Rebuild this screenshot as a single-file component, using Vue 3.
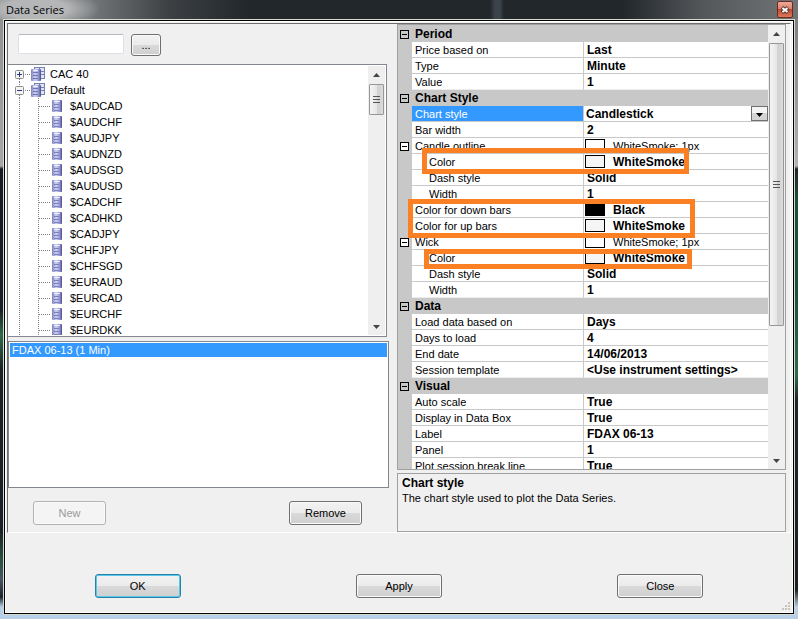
<script setup>
import { ref } from 'vue'

const instruments = [
  '$AUDCAD', '$AUDCHF', '$AUDJPY', '$AUDNZD', '$AUDSGD', '$AUDUSD', '$CADCHF',
  '$CADHKD', '$CADJPY', '$CHFJPY', '$CHFSGD', '$EURAUD', '$EURCAD', '$EURCHF', '$EURDKK'
]

const rows = [
  { kind: 'category', label: 'Period' },
  { label: 'Price based on', value: 'Last' },
  { label: 'Type', value: 'Minute' },
  { label: 'Value', value: '1' },
  { kind: 'category', label: 'Chart Style' },
  { label: 'Chart style', kind: 'select' },
  { label: 'Bar width', value: '2' },
  { label: 'Candle outline', value: 'WhiteSmoke; 1px', group: true, swatch: 'light' },
  { label: 'Color', value: 'WhiteSmoke', child: true, swatch: 'smoke' },
  { label: 'Dash style', value: 'Solid', child: true },
  { label: 'Width', value: '1', child: true },
  { label: 'Color for down bars', value: 'Black', swatch: 'black' },
  { label: 'Color for up bars', value: 'WhiteSmoke', swatch: 'smoke' },
  { label: 'Wick', value: 'WhiteSmoke; 1px', group: true, swatch: 'light' },
  { label: 'Color', value: 'WhiteSmoke', child: true, swatch: 'smoke' },
  { label: 'Dash style', value: 'Solid', child: true },
  { label: 'Width', value: '1', child: true },
  { kind: 'category', label: 'Data' },
  { label: 'Load data based on', value: 'Days' },
  { label: 'Days to load', value: '4' },
  { label: 'End date', value: '14/06/2013' },
  { label: 'Session template', value: '<Use instrument settings>' },
  { kind: 'category', label: 'Visual' },
  { label: 'Auto scale', value: 'True' },
  { label: 'Display in Data Box', value: 'True' },
  { label: 'Label', value: 'FDAX 06-13' },
  { label: 'Panel', value: '1' },
  { label: 'Plot session break line', value: 'True' }
]

const search = ref('')
const chartStyle = ref('Candlestick')
</script>

<template>
  <div class="window">
    <header class="titlebar">
      <span class="title">Data Series</span>
      <button class="close" type="button" aria-label="Close window">
        <svg width="10" height="10" viewBox="0 0 10 10">
          <path d="M2 2.500 L8 7.500 M8 2.500 L2 7.500" stroke="#5a3a3a" stroke-width="4" />
          <path d="M2.500 3 L7.500 7 M7.500 3 L2.500 7" stroke="#fff" stroke-width="2" />
        </svg>
      </button>
    </header>

    <div class="frame">
      <div class="body">
        <main class="panel">
          <section class="left">
            <div class="search">
              <input v-model="search" class="search-box" type="text" aria-label="Search instruments" />
              <button class="btn more" type="button">...</button>
            </div>

            <div class="tree">
              <ul class="nodes">
                <li class="node">
                  <svg class="root-art" width="42" height="16" viewBox="0 0 42 16">
                    <path d="M11.5 13 V16 M17 8.5 H23" class="dots" />
                    <rect x="7.5" y="4.5" width="8" height="8" rx="1" fill="#f4f4f4" stroke="#8c8c8c" />
                    <path d="M9 8.5 H14 M11.5 6 V11" stroke="#26387e" />
                    <use href="#folder-art" />
                  </svg>
                  <span>CAC 40</span>
                </li>
                <li class="node">
                  <svg class="root-art" width="42" height="16" viewBox="0 0 42 16">
                    <defs>
                      <linearGradient id="cylinder">
                        <stop offset="0" stop-color="#7b80ba" />
                        <stop offset="0.4" stop-color="#d0d2f4" />
                        <stop offset="0.7" stop-color="#a3a6dc" />
                        <stop offset="1" stop-color="#4a4c8f" />
                      </linearGradient>
                      <g id="folder-art">
                        <rect x="26.5" y="1.5" width="10" height="11" fill="#dfe6f6" stroke="#7781ae" />
                        <path d="M31.5 2 V12 M32 5.5 H36 M32 8.5 H36" stroke="#7781ae" />
                        <rect x="23" y="3" width="10" height="12" rx="1" fill="url(#cylinder)" />
                        <path d="M25 6.5 H30 M25 9.5 H30 M25 12.5 H30" stroke="#7075b2" />
                        <path d="M25 4.5 H30" stroke="#eef0ff" />
                      </g>
                    </defs>
                    <path d="M11.5 0 V4 M11.5 13 V16 M17 8.5 H23" class="dots" />
                    <rect x="7.5" y="4.5" width="8" height="8" rx="1" fill="#f4f4f4" stroke="#8c8c8c" />
                    <path d="M9 8.5 H14" stroke="#26387e" />
                    <use href="#folder-art" />
                  </svg>
                  <span>Default</span>
                </li>
                <li v-for="name in instruments" :key="name" class="node">
                  <svg class="leaf-art" width="62" height="16" viewBox="0 0 62 16">
                    <path d="M11.5 0 V16 M30.5 0 V16 M31 8.5 H42" class="dots" />
                    <rect x="44" y="2" width="10" height="12" rx="1" fill="url(#cylinder)" />
                    <path d="M46 3.5 H52" stroke="#eef0ff" />
                    <path d="M46 6.5 H51 M46 9.5 H51 M46 12.5 H51" stroke="#7b80bb" />
                  </svg>
                  <span>{{ name }}</span>
                </li>
              </ul>
              <div class="scrollbar">
                <svg width="7" height="4" viewBox="0 0 7 4"><path d="M0 4 L3.500 0 L7 4 Z" fill="#444" /></svg>
                <div class="thumb short">
                  <svg width="7" height="10" viewBox="0 0 7 10"><path d="M0 1.500 H7 M0 4.500 H7 M0 7.500 H7" stroke="#555" /></svg>
                </div>
                <svg class="down" width="7" height="4" viewBox="0 0 7 4"><path d="M0 0 L3.500 4 L7 0 Z" fill="#444" /></svg>
              </div>
            </div>

            <ul class="series" role="listbox" aria-label="Selected series">
              <li role="option" aria-selected="true">FDAX 06-13 (1 Min)</li>
            </ul>

            <div class="series-actions">
              <button class="btn" type="button" disabled>New</button>
              <button class="btn" type="button">Remove</button>
            </div>
          </section>

          <section class="right">
            <div class="properties">
              <div class="sheet">
                <table>
                  <colgroup>
                    <col class="col-gutter" />
                    <col class="col-name" />
                    <col />
                  </colgroup>
                  <tbody>
                    <tr v-for="(row, i) in rows" :key="i" :class="{ category: row.kind === 'category', selected: row.kind === 'select' }">
                      <td class="gutter">
                        <button v-if="row.kind === 'category' || row.group" class="toggle" :class="{ filled: row.group }" type="button" :aria-label="'Collapse ' + row.label">
                          <svg width="9" height="9" viewBox="0 0 9 9">
                            <rect x="0.5" y="0.5" width="8" height="8" fill="none" stroke="#000" />
                            <path d="M2 4.500 H7" stroke="#000" />
                          </svg>
                        </button>
                      </td>
                      <th v-if="row.kind === 'category'" colspan="2">{{ row.label }}</th>
                      <template v-else>
                        <td class="name" :class="{ child: row.child }">
                          <label v-if="row.kind === 'select'" for="chart-style">{{ row.label }}</label>
                          <template v-else>{{ row.label }}</template>
                        </td>
                        <td class="value" :class="{ plain: row.group }">
                          <div v-if="row.kind === 'select'" class="picker">
                            <select id="chart-style" v-model="chartStyle">
                              <option>Candlestick</option>
                            </select>
                            <span class="arrow">
                              <svg width="7" height="4" viewBox="0 0 7 4"><path d="M0 0 H7 L3.500 4 Z" fill="#000" /></svg>
                            </span>
                          </div>
                          <div v-else class="cell">
                            <span v-if="row.swatch" class="swatch" :class="row.swatch"></span>
                            <span class="text">{{ row.value }}</span>
                          </div>
                        </td>
                      </template>
                    </tr>
                  </tbody>
                </table>
                <div class="mark outline-color"></div>
                <div class="mark bar-colors"></div>
                <div class="mark wick-color"></div>
              </div>
              <div class="scrollbar">
                <svg width="7" height="4" viewBox="0 0 7 4"><path d="M0 4 L3.500 0 L7 4 Z" fill="#444" /></svg>
                <div class="thumb long">
                  <svg width="7" height="10" viewBox="0 0 7 10"><path d="M0 1.500 H7 M0 4.500 H7 M0 7.500 H7" stroke="#555" /></svg>
                </div>
                <svg class="down" width="7" height="4" viewBox="0 0 7 4"><path d="M0 0 L3.500 4 L7 0 Z" fill="#444" /></svg>
              </div>
            </div>

            <div class="help">
              <h2>Chart style</h2>
              <p>The chart style used to plot the Data Series.</p>
            </div>
          </section>
        </main>

        <footer class="actions">
          <button class="btn primary" type="button">OK</button>
          <button class="btn" type="button">Apply</button>
          <button class="btn" type="button">Close</button>
          <svg class="grip" width="9" height="9" viewBox="0 0 9 9">
            <path d="M6 0h2v2h-2z M3 3h2v2h-2z M6 3h2v2h-2z M0 6h2v2h-2z M3 6h2v2h-2z M6 6h2v2h-2z" fill="#c8c4bd" />
          </svg>
        </footer>
      </div>
    </div>
  </div>
</template>

<style>
body {
  margin: 0;
}
</style>

<style scoped>
* {
  box-sizing: border-box;
}

.window {
  min-height: 100vh;
  padding: 0 3px 4px;
  font: 11px/16px "Liberation Sans", Arial, sans-serif;
  color: #000;
  background:
    linear-gradient(#b7cfe8, #b7cfe8) bottom / 100% 4px no-repeat,
    linear-gradient(#8b8d90 0, #a5a7aa 166px, #171b24 169px, #1a1f28 310px, #2f6b4c 335px, #1a2029 370px, #1b2029 530px, #2a5240 560px, #4a5468 580px, #1c222c 597px, #b7cfe8 607px) left / 3px 100% no-repeat,
    linear-gradient(#77797c 0, #b0b2b4 166px, #20262a 169px, #1e5039 200px, #1e5039 290px, #2f6b4c 375px, #20242b 400px, #1c2026 590px, #b7cfe8 607px) right / 3px 100% no-repeat,
    #24282c;
}

.titlebar {
  display: flex;
  justify-content: space-between;
  height: 19px;
  margin: 0 -3px;
  padding: 0 5px 0 6px;
  background:
    linear-gradient(90deg, transparent 490px, #3b434b 495px, #3b434b 500px, transparent 504px),
    radial-gradient(ellipse 64px 20px at 36px 9px, #b4b6b8 50%, transparent),
    linear-gradient(90deg, #828486 0, #75787a 90px, #3c4043 170px, #22272b 250px, #22272b 78%, #54575a 88%, #727476 100%);
}

.title {
  font: 11px/19px "Open Sans", "Noto Sans", sans-serif;
}

.close {
  display: flex;
  align-items: center;
  justify-content: center;
  width: 16px;
  height: 17px;
  margin-top: 1px;
  padding: 0;
  border: 1px solid #6b2b22;
  border-radius: 2px;
  background: linear-gradient(#eeaa98, #dd7c66 50%, #c44527 50%, #dc7a5c);
}

.frame {
  border: 1px solid #d6dacb;
}

.body {
  border: 1px solid #000;
  padding: 2px;
  background: #f0f0f0;
  box-shadow: inset 0 0 0 1px #fff;
}

.panel {
  display: grid;
  grid-template-columns: minmax(0, 381fr) minmax(0, 389fr);
  gap: 8px;
  padding-right: 4px;
  border: 1px solid #fff;
  border-top-color: #707070;
  border-left-color: #707070;
}

.left,
.right {
  display: flex;
  flex-direction: column;
}

.search {
  display: flex;
  gap: 7px;
  height: 40px;
  padding: 10px 10px 0;
}

.search-box {
  width: 106px;
  height: 20px;
  padding: 0 4px;
  border: 1px solid #dcdfe4;
  border-top-color: #b4b8be;
  border-radius: 2px;
  background: #fff;
  font: inherit;
}

.btn {
  height: 24px;
  padding: 0;
  border: 1px solid #707070;
  border-radius: 3px;
  box-shadow: inset 0 0 0 1px #fafafa;
  background: linear-gradient(#f2f2f2, #ebebeb 50%, #dadada 50%, #cfcfcf);
  color: #000;
  font: 11px/16px "Liberation Sans", Arial, sans-serif;
}

.btn.more {
  width: 30px;
  height: 22px;
}

.btn:disabled {
  border-color: #b0b2b5;
  background: #f4f4f4;
  color: #9a9a9a;
}

.btn.primary {
  border-color: #2c7fa8;
  box-shadow: inset 0 0 0 1px #55c8ee;
}

.tree {
  display: flex;
  height: 273px;
  margin-right: 2px;
  padding: 1px;
  border: 1px solid #828790;
  border-left: 0;
  background: #fff;
}

.nodes {
  flex: 1;
  margin: 0 0 0 -1px;
  padding: 0;
  overflow: hidden;
  list-style: none;
}

.node {
  display: flex;
  height: 16px;
}

.dots {
  fill: none;
  stroke: #808080;
  stroke-dasharray: 1 1;
}

.scrollbar {
  display: flex;
  flex-direction: column;
  align-items: center;
  width: 17px;
  padding: 7px 0 6px;
  background: #efefef;
}

.thumb {
  display: flex;
  align-items: center;
  justify-content: center;
  width: 15px;
  margin-top: 7px;
  border: 1px solid #979797;
  border-radius: 1px;
  background: linear-gradient(90deg, #f5f5f5, #e6e6e6 50%, #cfd0d2 60%, #dcdcdc);
}

.thumb.short {
  height: 31px;
}

.thumb.long {
  height: 283px;
}

.down {
  margin-top: auto;
}

.series {
  height: 147px;
  margin: 4px 0 0;
  padding: 1px;
  border: 1px solid #828790;
  background: #fff;
  list-style: none;
}

.series li {
  padding-left: 2px;
  background: #3399ff;
  color: #fff;
  line-height: 14px;
}

.series-actions {
  display: flex;
  justify-content: space-between;
  padding: 13px 27px 0 25px;
}

.series-actions .btn {
  width: 73px;
}

.right {
  gap: 3px;
}

.properties {
  display: flex;
  height: 446px;
  border: 1px solid #a0a0a0;
}

.sheet {
  position: relative;
  flex: 1;
  min-width: 0;
  padding-top: 1px;
  overflow: hidden;
  background: #c8c8c8;
}

table {
  width: 100%;
  table-layout: fixed;
  border-spacing: 0;
}

.col-gutter {
  width: 14px;
}

.col-name {
  width: 172px;
}

tr {
  height: 16px;
}

td,
th {
  height: 16px;
  padding: 0;
  line-height: 15px;
  white-space: nowrap;
}

th {
  padding-left: 3px;
  text-align: left;
  font-size: 12px;
}

.toggle {
  display: block;
  width: 9px;
  height: 9px;
  margin-left: 2px;
  padding: 0;
  border: 0;
  background: none;
}

.toggle.filled {
  background: #fff;
}

.toggle svg {
  display: block;
}

.name {
  padding: 2px 0 0 3px;
  border-right: 1px solid #c8c8c8;
  border-bottom: 1px solid #c8c8c8;
  background: #fff;
  line-height: 13px;
}

.name.child {
  padding-left: 17px;
}

.selected .name {
  background: #3399ff;
  color: #fff;
}

.value {
  border-bottom: 1px solid #c8c8c8;
  background: #fff;
  font-size: 12px;
  font-weight: bold;
}

tr:has(+ .category) .name,
tr:has(+ .category) .value {
  border-bottom-color: #ececec;
}

.value.plain {
  font-size: 11px;
  font-weight: normal;
}

.cell {
  display: flex;
  align-items: center;
  height: 15px;
  padding-left: 3px;
}

.text {
  padding-top: 2px;
  line-height: 13px;
}

.swatch {
  width: 20px;
  height: 13px;
  margin: 0 8px 0 -2px;
  border: 1px solid #000;
}

.swatch.light {
  background: #fff;
}

.swatch.smoke {
  background: #f5f5f5;
}

.swatch.black {
  background: #000;
}

.picker {
  display: flex;
  height: 15px;
}

select {
  flex: 1;
  min-width: 0;
  height: 15px;
  padding: 2px 0 0 2px;
  border: 0;
  appearance: none;
  background: #fff;
  color: #000;
  font: bold 12px/13px "Liberation Sans", Arial, sans-serif;
}

.arrow {
  display: flex;
  align-items: center;
  justify-content: center;
  width: 17px;
  padding-top: 3px;
  border: 1px solid #707070;
  background: linear-gradient(#f4f4f4 50%, #d4d4d4 50%);
}

/* Highlight frames laid over groups of colour rows */
.mark {
  position: absolute;
  border: 5px solid #fb8024;
}

.outline-color {
  top: 123px;
  left: 24px;
  width: 267px;
  height: 26px;
}

.bar-colors {
  top: 174px;
  left: 10px;
  width: 287px;
  height: 39px;
}

.wick-color {
  top: 224px;
  left: 26px;
  width: 268px;
  height: 20px;
}

.help {
  height: 59px;
  padding: 2px 4px;
  border: 1px solid #a0a0a0;
}

.help h2 {
  margin: 0;
  font-size: 12px;
  line-height: 15px;
}

.help p {
  margin: 0;
  line-height: 15px;
}

.actions {
  position: relative;
  display: grid;
  grid-template-columns: repeat(3, 1fr);
  justify-items: center;
  padding: 41px 0 13px;
}

.actions .btn {
  width: 86px;
}

.grip {
  position: absolute;
  right: 0;
  bottom: 0;
}
</style>
